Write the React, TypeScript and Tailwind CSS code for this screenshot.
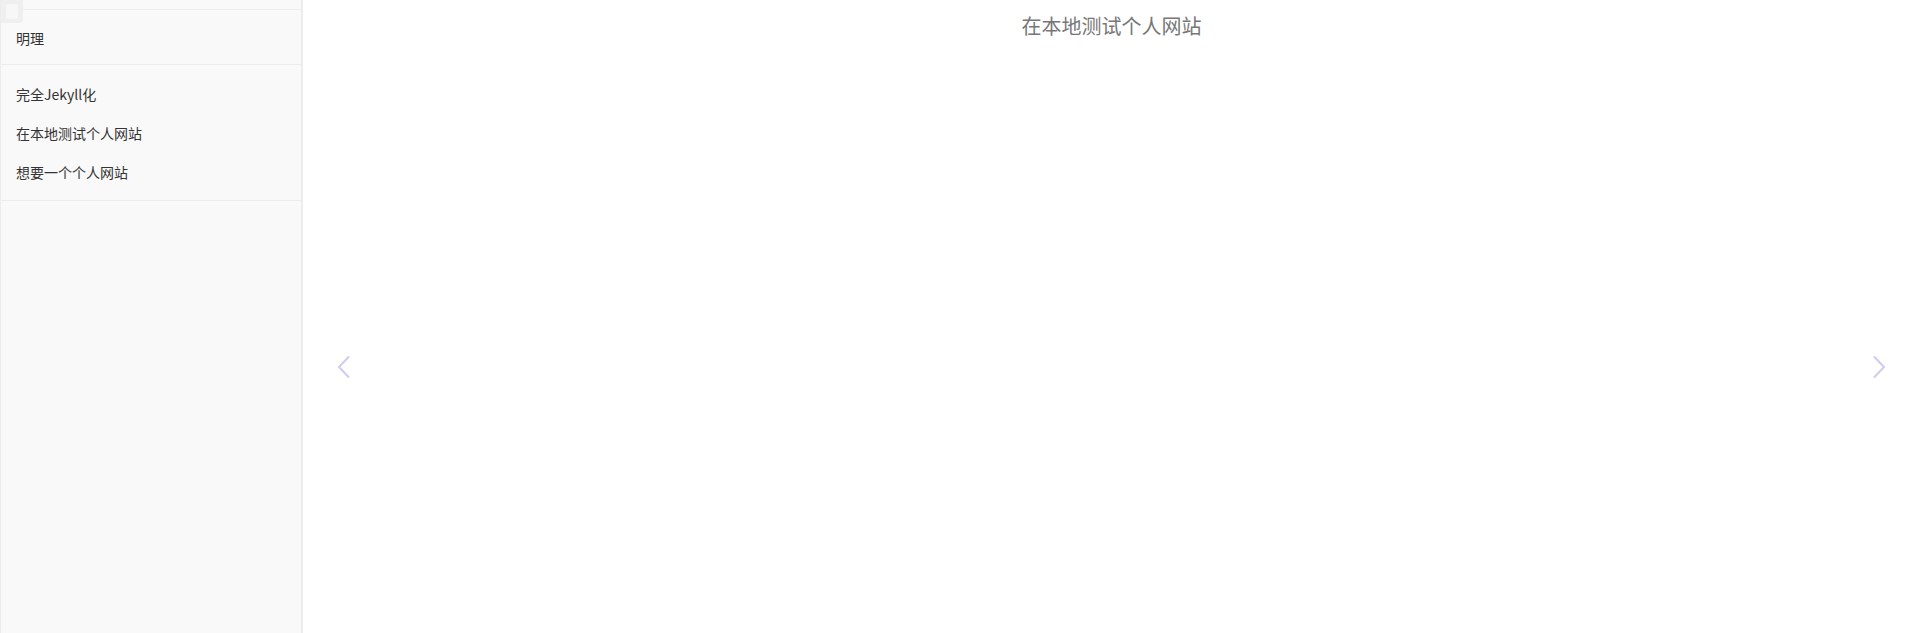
const posts = ["完全Jekyll化", "在本地测试个人网站", "想要一个个人网站"];

function Chevron({ dir }: { dir: "left" | "right" }) {
	return (
		<svg width="14" height="24" viewBox="0 0 14 24" fill="none">
			<path
				d={dir === "left" ? "M11.5 2 L2 12 L11.5 22" : "M2.5 2 L12 12 L2.5 22"}
				stroke="#d3cbee"
				strokeWidth="2"
				strokeLinecap="round"
				strokeLinejoin="round"
			/>
		</svg>
	);
}

export default function App() {
	return (
		<div
			className="flex w-full h-[633px] bg-white text-[#333] overflow-hidden"
			style={{ fontFamily: '"Microsoft YaHei", "Noto Sans CJK SC", sans-serif' }}
		>
			{/* sidebar */}
			<aside className="relative w-[303px] shrink-0 h-full bg-[#f9f9f9] border-l border-r-2 border-[#ececec]">
				<div className="h-[10px] border-b border-[#ececec]" />
				<button className="absolute left-0 top-0 w-[22px] h-[23px] rounded-br-[4px] bg-[#efefef] flex items-center justify-center">
					<span className="block w-[12px] h-[15px] rounded-[2px] bg-[#f7f7f7]" />
				</button>
				<div className="pt-[8px] pb-[7px] border-b border-[#ececec]">
					<div className="h-[39px] pl-[15px] flex items-center text-[14px] leading-none">明理</div>
				</div>
				<div className="py-[9px] border-b border-[#ececec]">
					{posts.map((p) => (
						<div key={p} className="h-[39px] pl-[15px] flex items-center text-[14px] leading-none">
							{p}
						</div>
					))}
				</div>
			</aside>

			{/* main */}
			<main className="relative flex-1 h-full">
				<h1 className="h-[52px] flex items-center justify-center text-[20px] leading-none text-[#777] font-normal">
					在本地测试个人网站
				</h1>
				<button className="absolute left-[34px] top-[355px] p-0">
					<Chevron dir="left" />
				</button>
				<button className="absolute right-[34px] top-[355px] p-0">
					<Chevron dir="right" />
				</button>
			</main>
		</div>
	);
}
